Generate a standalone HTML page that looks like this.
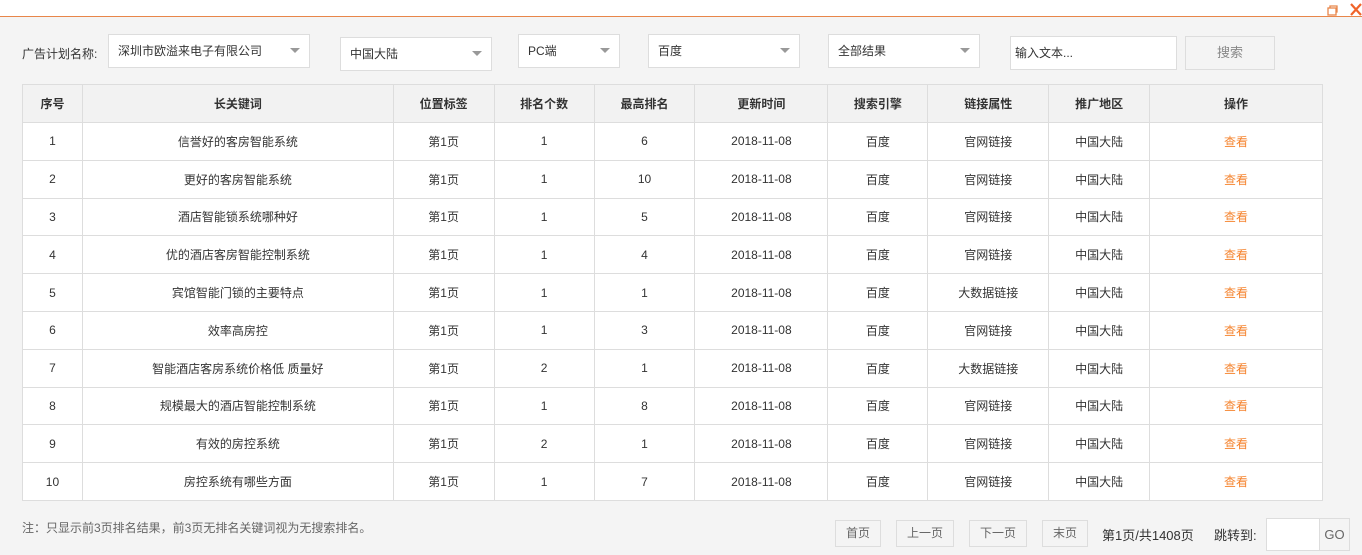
<!DOCTYPE html>
<html><head><meta charset="utf-8"><style>
*{box-sizing:border-box;margin:0;padding:0}
body{width:1362px;height:555px;background:#f4f4f4;font-family:"Liberation Sans","Noto Sans CJK SC",sans-serif;font-size:12px;color:#333;position:relative;overflow:hidden}
.top{position:absolute;left:0;top:0;width:1362px;height:17px;background:#fff;border-bottom:1px solid #e8864a}
.abs{position:absolute}
.sel{position:absolute;background:#fff;border:1px solid #ddd;height:34px;line-height:32px;padding-left:9px}
.sel.a:after{content:"";position:absolute;right:9px;top:13px;border-left:5px solid transparent;border-right:5px solid transparent;border-top:5px solid #999}
table{position:absolute;left:22px;top:84px;width:1301px;border-collapse:collapse;background:#fff}
td,th{border:1px solid #ddd;text-align:center;height:37.8px;font-size:12px}
th{background:#f2f2f2;font-weight:bold;height:38px}
.v{color:#f5842f}
.btn{position:absolute;border:1px solid #ddd;background:#f4f4f4;color:#666;text-align:center;height:27px;line-height:25px}
</style></head><body>
<div class="top"></div>
<svg class="abs" style="left:1327px;top:4px" width="12" height="12"><rect x="1" y="4" width="8" height="7" fill="none" stroke="#e8864a" stroke-width="1.3"/><path d="M3 4V2h7v6H9" fill="none" stroke="#e8864a" stroke-width="1.3"/></svg>
<svg class="abs" style="left:1350px;top:3px" width="12" height="13"><path d="M1 1L11 12M11 1L1 12" stroke="#f0642a" stroke-width="2.2"/></svg>
<div class="abs" style="left:22px;top:45px">广告计划名称:</div>
<div class="sel a" style="left:108px;top:34px;width:202px">深圳市欧溢来电子有限公司</div>
<div class="sel a" style="left:340px;top:37px;width:152px">中国大陆</div>
<div class="sel a" style="left:518px;top:34px;width:102px">PC端</div>
<div class="sel a" style="left:648px;top:34px;width:152px">百度</div>
<div class="sel a" style="left:828px;top:34px;width:152px">全部结果</div>
<div class="sel" style="left:1010px;top:36px;width:167px;padding-left:4px">输入文本...</div>
<div class="abs" style="left:1185px;top:36px;width:90px;height:34px;border:1px solid #ddd;background:#f4f4f4;text-align:center;line-height:32px;color:#888;font-size:13px">搜索</div>
<table>
<colgroup><col style="width:60px"><col style="width:311px"><col style="width:101px"><col style="width:100px"><col style="width:101px"><col style="width:133px"><col style="width:100px"><col style="width:121px"><col style="width:101px"><col style="width:173px"></colgroup>
<tr><th>序号</th><th>长关键词</th><th>位置标签</th><th>排名个数</th><th>最高排名</th><th>更新时间</th><th>搜索引擎</th><th>链接属性</th><th>推广地区</th><th>操作</th></tr>
<tr><td>1</td><td>信誉好的客房智能系统</td><td>第1页</td><td>1</td><td>6</td><td>2018-11-08</td><td>百度</td><td>官网链接</td><td>中国大陆</td><td class="v">查看</td></tr>
<tr><td>2</td><td>更好的客房智能系统</td><td>第1页</td><td>1</td><td>10</td><td>2018-11-08</td><td>百度</td><td>官网链接</td><td>中国大陆</td><td class="v">查看</td></tr>
<tr><td>3</td><td>酒店智能锁系统哪种好</td><td>第1页</td><td>1</td><td>5</td><td>2018-11-08</td><td>百度</td><td>官网链接</td><td>中国大陆</td><td class="v">查看</td></tr>
<tr><td>4</td><td>优的酒店客房智能控制系统</td><td>第1页</td><td>1</td><td>4</td><td>2018-11-08</td><td>百度</td><td>官网链接</td><td>中国大陆</td><td class="v">查看</td></tr>
<tr><td>5</td><td>宾馆智能门锁的主要特点</td><td>第1页</td><td>1</td><td>1</td><td>2018-11-08</td><td>百度</td><td>大数据链接</td><td>中国大陆</td><td class="v">查看</td></tr>
<tr><td>6</td><td>效率高房控</td><td>第1页</td><td>1</td><td>3</td><td>2018-11-08</td><td>百度</td><td>官网链接</td><td>中国大陆</td><td class="v">查看</td></tr>
<tr><td>7</td><td>智能酒店客房系统价格低 质量好</td><td>第1页</td><td>2</td><td>1</td><td>2018-11-08</td><td>百度</td><td>大数据链接</td><td>中国大陆</td><td class="v">查看</td></tr>
<tr><td>8</td><td>规模最大的酒店智能控制系统</td><td>第1页</td><td>1</td><td>8</td><td>2018-11-08</td><td>百度</td><td>官网链接</td><td>中国大陆</td><td class="v">查看</td></tr>
<tr><td>9</td><td>有效的房控系统</td><td>第1页</td><td>2</td><td>1</td><td>2018-11-08</td><td>百度</td><td>官网链接</td><td>中国大陆</td><td class="v">查看</td></tr>
<tr><td>10</td><td>房控系统有哪些方面</td><td>第1页</td><td>1</td><td>7</td><td>2018-11-08</td><td>百度</td><td>官网链接</td><td>中国大陆</td><td class="v">查看</td></tr>
</table>
<div class="abs" style="left:22px;top:519px;color:#666">注：只显示前3页排名结果，前3页无排名关键词视为无搜索排名。</div>
<div class="btn" style="left:835px;top:520px;width:46px">首页</div>
<div class="btn" style="left:896px;top:520px;width:58px">上一页</div>
<div class="btn" style="left:969px;top:520px;width:58px">下一页</div>
<div class="btn" style="left:1042px;top:520px;width:46px">末页</div>
<div class="abs" style="left:1102px;top:525px;font-size:13px">第1页/共1408页</div>
<div class="abs" style="left:1214px;top:525px;font-size:13px">跳转到:</div>
<div class="abs" style="left:1266px;top:518px;width:54px;height:33px;background:#fff;border:1px solid #ddd"></div>
<div class="abs" style="left:1319px;top:518px;width:31px;height:33px;border:1px solid #ddd;text-align:center;line-height:31px;color:#666;font-size:13px">GO</div>
</body></html>
